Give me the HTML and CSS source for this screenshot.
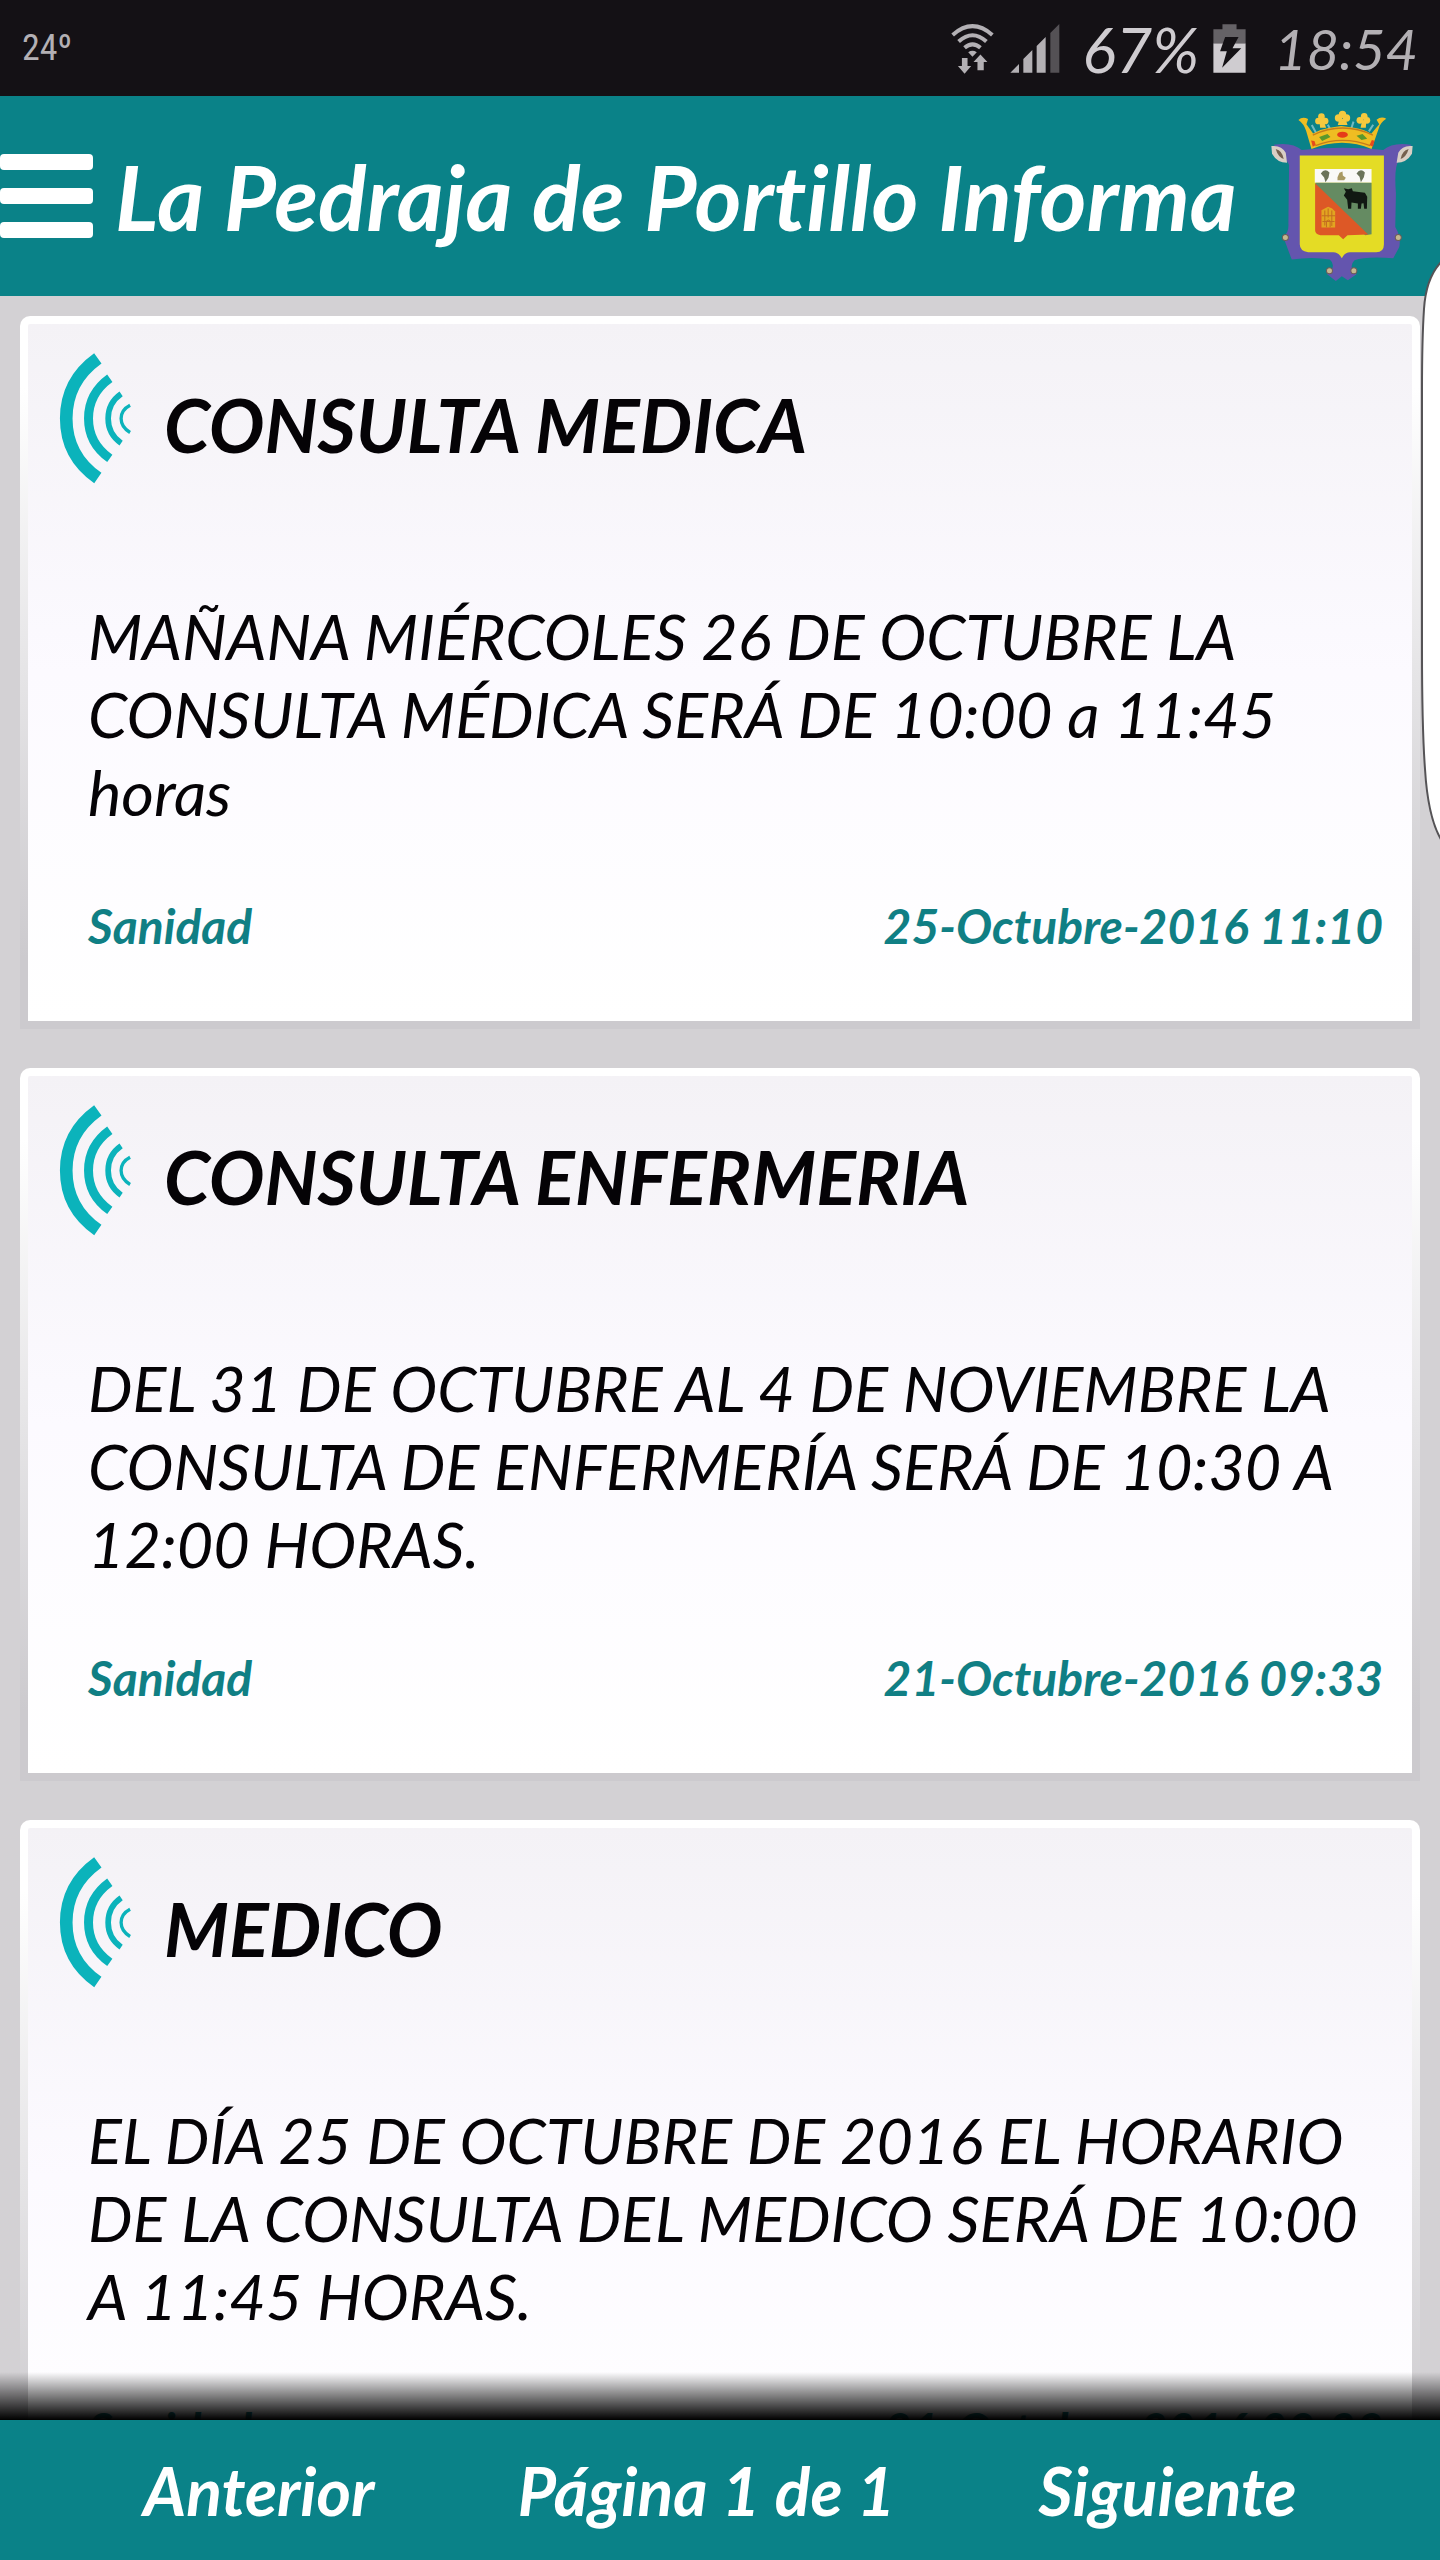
FILE: index.html
```html
<!DOCTYPE html>
<html lang="es">
<head>
    <meta charset="UTF-8">
    <meta name="viewport" content="width=device-width, initial-scale=1.0">
    <title>La Pedraja de Portillo Informa</title>
    <link rel="stylesheet" href="styles.css">
</head>
<body>
    <div class="status-bar">
        <span class="temp">24º</span>
        <svg class="icon-wifi" viewBox="110 66 130 152" aria-hidden="true">
            <g fill="none" stroke="#b3b0b4" stroke-width="12">
                <path d="M115 101 Q175 48 235 101"/>
                <path d="M133 121 Q175 83 217 121"/>
                <path d="M151 140 Q175 119 199 140"/>
            </g>
            <path fill="#b3b0b4" d="M162 153 Q175 144 188 153 L175 167z"/>
            <path fill="#b3b0b4" d="M143 171h17v24h11l-20 23-20-23h12zM190 208v-25h-12l21-23 21 23h-11v25z"/>
        </svg>
        <svg class="icon-signal" viewBox="287 70 150 147" aria-hidden="true">
            <path fill="#b3b0b4" d="M288 216l26-26v26zM327 216v-41l27-27v68zM367 216v-80l27-27v107z"/>
            <path fill="#545155" d="M408 216V97l27-27v146z"/>
        </svg>
        <span class="battery-text">67%</span>
        <svg class="icon-battery" viewBox="896 71 98 146" aria-hidden="true">
            <path fill="#656266" d="M897 87h27V72h42v15h27v43h-96z"/>
            <path fill="#cfccd0" d="M897 129h96v87h-96z"/>
            <path fill="#141115" d="M932 110h40l-18 33h26l-57 58 14-49h-20z"/>
        </svg>
        <span class="clock">18:54</span>
    </div>

    <header class="header">
        <button type="button" class="btn-menu" aria-label="Menú">
            <span class="bar"></span>
            <span class="bar"></span>
            <span class="bar"></span>
        </button>
        <h1>La Pedraja de Portillo Informa</h1>
        <svg class="crest" viewBox="90 60 440 515" role="img" aria-label="Escudo">
            <!-- Manto -->
            <path fill="#6455ae" d="M104 164 Q160 155 188 180 Q310 166 432 180 Q460 155 516 164 L478 212 Q464 230 470 310 L468 410 Q486 440 480 470 L462 504 Q380 498 346 510 Q326 530 352 552 L326 570 L308 558 L290 572 L264 552 Q294 528 272 508 Q220 498 158 508 L132 438 Q150 430 148 400 L150 225 Q144 208 104 164z"/>
            <path fill="#d9cfc5" d="M97 168q30-4 43 20l4 30q-30 0-45-27zM520 168q-30-4-43 20l-5 30q30 0 46-27z"/>
            <path fill="#75604f" d="M110 177q20 5 24 30q-17-6-24-30zM508 177q-20 5-24 30q17-6 24-30z"/>
            <g fill="#c4b78f" stroke="#6d5c57" stroke-width="3">
                <circle cx="139" cy="442" r="9"/>
                <circle cx="477" cy="442" r="9"/>
                <circle cx="271" cy="541" r="9"/>
                <circle cx="344" cy="541" r="9"/>
            </g>
            <!-- Corona -->
            <g fill="none" stroke="#73bac3" stroke-width="6">
                <path d="M218 105l13 24M266 104l8 15M343 95l-8 24M402 104l-13 20"/>
            </g>
            <path fill="#efbd22" d="M178 90q12-12 29-3l-5 16 20 27q23-13 50-17l34-5 38 5q31 5 52 18l24-28-8-14q14-12 29-3-18 12-22 28l-22 63q-87-38-180 0l-16-55q-7-21-23-32z"/>
            <g fill="#f5c93e">
                <circle cx="238" cy="93" r="10"/><circle cx="258" cy="93" r="10"/><circle cx="247" cy="80" r="10"/><path d="M241 90h12l8 23h-18z"/>
                <circle cx="298" cy="84" r="11"/><circle cx="322" cy="84" r="11"/><circle cx="310" cy="73" r="11"/><path d="M301 86h18l6 19h-29z"/>
                <circle cx="362" cy="91" r="10"/><circle cx="383" cy="91" r="10"/><circle cx="375" cy="79" r="10"/><path d="M369 91h12l-1 22h-16z"/>
            </g>
            <path fill="none" stroke="#c67b1b" stroke-width="4" d="M221 135q89-42 180 0M229 167q80-32 164 0"/>
            <ellipse cx="310" cy="134" rx="16" ry="9" fill="#e63b18"/>
            <path fill="#5c982c" d="M240 141l25-9 9 9-25 12zM352 137l18-5 14 14-17 4z"/>
            <path fill="#e54a1c" d="M216 151l10 2 4 12-9 5zM398 150l8 2-5 18-10-5z"/>
            <!-- Escudo -->
            <path fill="#e4dc25" d="M182 196h252v267q0 23-23 23h-79q-15 0-24 18-10-18-25-18h-76q-25-4-25-24z"/>
            <path fill="#faf9f7" d="M227 237h170v41H227z"/>
            <path fill="#658b62" d="M229 278h168v154l-19 3L229 283z"/>
            <path fill="#dd5826" d="M228 279l159 154-62 2-13 12-13-12h-55q-16-3-16-15z"/>
            <path fill="#6b735a" d="M245 250q12-18 26-3l-3 16-9 13-4-14zM352 250q12-18 25-3l-3 14-9 15-4-16z"/>
            <path fill="#a99963" d="M301 248l9-4 1 12 9 7-5 7h-20v-9z"/>
            <path fill="#111812" d="M314 294l13 3 11-3 3 9 36 5 7 12-1 36h-8l-2-17-6 1-2 16h-9v-16l-19-3-1 19h-9l-3-27-10-13 6-11z"/>
            <path fill="#e2a520" d="M247 360l11-6 9-4 12 5 9 9v48h-41z"/>
            <path fill="none" stroke="#c46d20" stroke-width="3" d="M257 361v45M267 355v27M278 361v46M248 377h40M250 394h36M262 411v-18q6-8 11 0v18"/>
        </svg>
    </header>

    <main class="list">
        <article class="card">
            <div class="card-head">
                <svg class="icon-waves" viewBox="170 155 230 400" aria-hidden="true">
                    <g fill="none" stroke="#0bb3bb">
                        <path stroke-width="38" d="M292 174Q197 242 197 355T292 534"/>
                        <path stroke-width="27" d="M328 234Q264 280 264 355T328 475"/>
                        <path stroke-width="17" d="M362 281Q323 308 323 355T362 429"/>
                        <path stroke-width="10" d="M389 315Q362 329 362 355T389 397"/>
                    </g>
                </svg>
                <h2>CONSULTA MEDICA</h2>
            </div>
            <p>MAÑANA MIÉRCOLES 26 DE OCTUBRE LA CONSULTA MÉDICA SERÁ DE 10:00 a 11:45 horas</p>
            <div class="card-foot">
                <span>Sanidad</span>
                <span>25-Octubre-2016 11:10</span>
            </div>
        </article>

        <article class="card">
            <div class="card-head">
                <svg class="icon-waves" viewBox="170 155 230 400" aria-hidden="true">
                    <g fill="none" stroke="#0bb3bb">
                        <path stroke-width="38" d="M292 174Q197 242 197 355T292 534"/>
                        <path stroke-width="27" d="M328 234Q264 280 264 355T328 475"/>
                        <path stroke-width="17" d="M362 281Q323 308 323 355T362 429"/>
                        <path stroke-width="10" d="M389 315Q362 329 362 355T389 397"/>
                    </g>
                </svg>
                <h2>CONSULTA ENFERMERIA</h2>
            </div>
            <p>DEL 31 DE OCTUBRE AL 4 DE NOVIEMBRE LA CONSULTA DE ENFERMERÍA SERÁ DE 10:30 A 12:00 HORAS.</p>
            <div class="card-foot">
                <span>Sanidad</span>
                <span>21-Octubre-2016 09:33</span>
            </div>
        </article>

        <article class="card">
            <div class="card-head">
                <svg class="icon-waves" viewBox="170 155 230 400" aria-hidden="true">
                    <g fill="none" stroke="#0bb3bb">
                        <path stroke-width="38" d="M292 174Q197 242 197 355T292 534"/>
                        <path stroke-width="27" d="M328 234Q264 280 264 355T328 475"/>
                        <path stroke-width="17" d="M362 281Q323 308 323 355T362 429"/>
                        <path stroke-width="10" d="M389 315Q362 329 362 355T389 397"/>
                    </g>
                </svg>
                <h2>MEDICO</h2>
            </div>
            <p>EL DÍA 25 DE OCTUBRE DE 2016 EL HORARIO DE LA CONSULTA DEL MEDICO SERÁ DE 10:00 A 11:45 HORAS.</p>
            <div class="card-foot">
                <span>Sanidad</span>
                <span>21-Octubre-2016 09:32</span>
            </div>
        </article>
    </main>

    <footer class="pager">
        <button type="button">Anterior</button>
        <span>Página 1 de 1</span>
        <button type="button">Siguiente</button>
    </footer>

    <!-- Panel lateral -->
    <svg class="edge-panel" viewBox="0 0 20 584" aria-hidden="true">
        <path fill="#fff" stroke="#555356" stroke-width="2" d="M22 2Q6 18 4 50Q2 80 2 130V390Q2 470 5 510Q8 560 22 582"/>
    </svg>
</body>
</html>
```
FILE: styles.css
```css
* {
    box-sizing: border-box;
}

body {
    background-color: #d3d1d4;
    color: #050306;
    display: flex;
    flex-direction: column;
    font-family: Lato, "Liberation Sans", sans-serif;
    font-style: italic;
    font-variant-ligatures: none;
    height: 100vh;
    margin: 0;
    position: relative;
}

h1, h2, p {
    margin: 0;
}

button {
    background: none;
    border: none;
    color: inherit;
    cursor: pointer;
    font: inherit;
    padding: 0;
}

/* Barra de estado */
.status-bar {
    align-items: center;
    background-color: #141115;
    color: #b3b0b4;
    display: flex;
    flex-shrink: 0;
    font-size: 56px;
    height: 96px;
    padding: 0 22px;
}

.temp {
    font-family: "Liberation Sans Narrow", "Roboto Condensed", Roboto, sans-serif;
    font-size: 36px;
    font-style: normal;
    margin-right: auto;
}

.icon-wifi {
    height: 51px;
    margin-right: 16px;
    width: 43px;
}

.icon-signal {
    height: 49px;
    margin-right: 22px;
    width: 50px;
}

.battery-text {
    color: #cfccd0;
    font-size: 63px;
}

.icon-battery {
    height: 49px;
    margin: 0 28px 0 14px;
    width: 33px;
}

/* Cabecera */
.header {
    align-items: center;
    background-color: #0a8288;
    color: #fff;
    display: flex;
    flex-shrink: 0;
    height: 200px;
    padding-right: 24px;
}

.header h1 {
    flex: 1;
    font-size: 90px;
    line-height: 96px;
    margin-left: 22px;
    white-space: nowrap;
}

.btn-menu {
    display: flex;
    flex-direction: column;
    gap: 18px;
    width: 93px;
}

.bar {
    background-color: #fff;
    border-radius: 4px;
    height: 16px;
}

.crest {
    flex-shrink: 0;
    height: 172px;
    width: 147px;
}

/* Lista de avisos */
.list {
    flex: 1;
    min-height: 0;
    overflow-y: auto;
    padding: 20px;
    scrollbar-width: none;
}

.card {
    background: linear-gradient(#f4f2f6, #fcfaff 50%, #fff) padding-box,
        linear-gradient(#fff 10%, #cccace 90%) border-box;
    border: 8px solid transparent;
    border-radius: 10px 10px 0 0;
    margin-bottom: 39px;
    padding: 28px 29px 60px;
}

.card-head {
    align-items: center;
    display: flex;
    gap: 30px;
}

.icon-waves {
    height: 133px;
    width: 77px;
}

.card h2 {
    font-size: 74px;
    line-height: 80px;
    padding-top: 12px;
}

.card p {
    font-size: 63px;
    line-height: 78px;
    margin: 112px 0 60px;
    padding-left: 31px;
}

.card-foot {
    color: #107f84;
    display: flex;
    font-size: 48px;
    font-weight: bold;
    justify-content: space-between;
    line-height: 70px;
    padding-left: 31px;
}

/* Paginador */
.pager {
    align-items: center;
    background-color: #0a8288;
    color: #fff;
    display: flex;
    flex-shrink: 0;
    font-size: 66px;
    font-weight: bold;
    height: 140px;
    justify-content: space-evenly;
    position: relative;
}

.pager::before {
    background: linear-gradient(transparent, #000);
    bottom: 100%;
    content: "";
    height: 48px;
    left: 0;
    pointer-events: none;
    position: absolute;
    right: 0;
}

.edge-panel {
    height: 584px;
    position: absolute;
    right: 0;
    top: 259px;
    width: 20px;
}
```
